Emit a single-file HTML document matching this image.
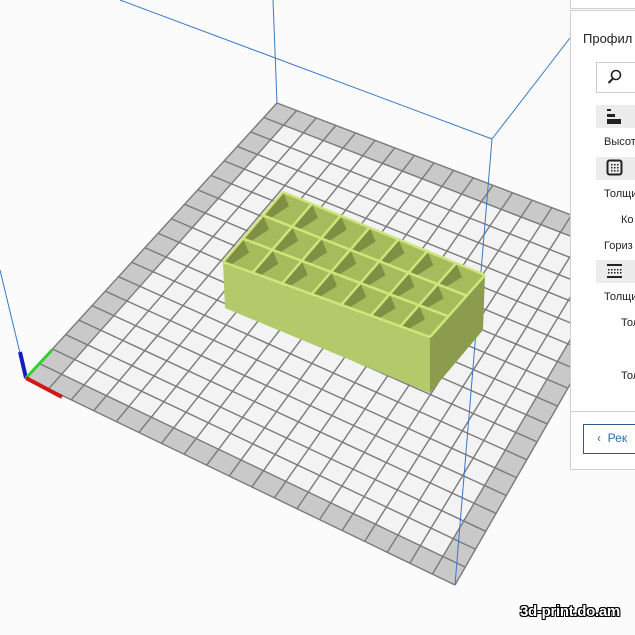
<!DOCTYPE html>
<html><head><meta charset="utf-8"><style>
html,body{margin:0;padding:0;width:635px;height:635px;overflow:hidden;background:#fbfbfb;font-family:"Liberation Sans","DejaVu Sans",sans-serif}
#panel{position:absolute;left:570px;top:10px;width:70px;height:458px;background:#fff;border-left:1px solid #d0d0d0;border-top:1px solid #d0d0d0;border-bottom:1px solid #d0d0d0}
#top{position:absolute;left:570px;top:-2px;width:70px;height:10px;background:#fff;border-left:1px solid #d0d0d0;border-bottom:1px solid #d0d0d0}
.t{position:absolute;font-size:11px;color:#222;white-space:nowrap}
.ib{position:absolute;left:596px;width:45px;height:23px;background:#ececec}
#wm{position:absolute;left:520px;top:603px;font-size:15px;font-weight:bold;color:#fff;letter-spacing:-0.3px;text-shadow:-1px -1px 0 #000,1px -1px 0 #000,-1px 1px 0 #000,1px 1px 0 #000,0 1px 0 #000,1px 0 0 #000,-1px 0 0 #000,0 -1px 0 #000}
</style></head><body>
<svg id="s" width="635" height="635" style="position:absolute;left:0;top:0"></svg>
<div id="top"></div>
<div id="panel"></div>
<div class="t" style="left:583px;top:31px;font-size:13px">Профил</div>
<div style="position:absolute;left:596px;top:62px;width:45px;height:29px;border:1px solid #ccc;background:#fff"></div>
<svg style="position:absolute;left:606px;top:68px" width="18" height="18"><circle cx="10" cy="7" r="4.5" fill="none" stroke="#222" stroke-width="1.6"/><line x1="7" y1="10.5" x2="2.5" y2="15" stroke="#222" stroke-width="2"/></svg>
<div class="ib" style="top:105px"></div>
<svg style="position:absolute;left:605px;top:108px" width="20" height="18"><rect x="2" y="1" width="4" height="2" fill="#222"/><rect x="2" y="6" width="8" height="3" fill="#222"/><rect x="2" y="11" width="14" height="5" fill="#222"/></svg>
<div class="t" style="left:604px;top:136px">Высот</div>
<div class="ib" style="top:157px"></div>
<svg style="position:absolute;left:606px;top:159px" width="18" height="18"><rect x="1.5" y="1.5" width="14" height="14" rx="2" fill="none" stroke="#222" stroke-width="2"/><g fill="#222"><rect x="5" y="5" width="1.5" height="1.5"/><rect x="8" y="5" width="1.5" height="1.5"/><rect x="11" y="5" width="1.5" height="1.5"/><rect x="5" y="8" width="1.5" height="1.5"/><rect x="8" y="8" width="1.5" height="1.5"/><rect x="11" y="8" width="1.5" height="1.5"/><rect x="5" y="11" width="1.5" height="1.5"/><rect x="8" y="11" width="1.5" height="1.5"/><rect x="11" y="11" width="1.5" height="1.5"/></g></svg>
<div class="t" style="left:604px;top:188px">Толщи</div>
<div class="t" style="left:621px;top:214px">Ко</div>
<div class="t" style="left:604px;top:240px">Гориз</div>
<div class="ib" style="top:260px"></div>
<svg style="position:absolute;left:605px;top:262px" width="20" height="18"><rect x="2" y="2" width="15" height="2" fill="#222"/><rect x="2" y="14" width="15" height="2" fill="#222"/><g fill="#222"><rect x="3" y="7" width="1.5" height="1.5"/><rect x="6" y="7" width="1.5" height="1.5"/><rect x="9" y="7" width="1.5" height="1.5"/><rect x="12" y="7" width="1.5" height="1.5"/><rect x="15" y="7" width="1.5" height="1.5"/><rect x="3" y="10" width="1.5" height="1.5"/><rect x="6" y="10" width="1.5" height="1.5"/><rect x="9" y="10" width="1.5" height="1.5"/><rect x="12" y="10" width="1.5" height="1.5"/><rect x="15" y="10" width="1.5" height="1.5"/></g></svg>
<div class="t" style="left:604px;top:291px">Толщи</div>
<div class="t" style="left:621px;top:317px">Тол</div>
<div class="t" style="left:621px;top:370px">Тол</div>
<div style="position:absolute;left:571px;top:411px;width:70px;border-top:1px solid #d0d0d0"></div>
<div style="position:absolute;left:583px;top:424px;width:60px;height:28px;border:1px solid #2d5b86;background:#fff"></div>
<div class="t" style="left:597px;top:431px;font-size:12px;color:#2d6ab0">&lsaquo;&nbsp; Рек</div>
<div id="wm">3d-print.do.am</div>
<script>
var s=document.getElementById('s'),h='';
function L(a,b,t){return[a[0]+(b[0]-a[0])*t,a[1]+(b[1]-a[1])*t]}
function bl(u,v){var p=L(T,R,u),q=L(Lf,B,u);return L(p,q,v)}
var T=[277,103],R=[650,245],B=[455,585],Lf=[26,378],N=19;
function poly(pts,f){return '<polygon points="'+pts.map(function(p){return p[0].toFixed(1)+','+p[1].toFixed(1)}).join(' ')+'" fill="'+f+'"/>'}
h+='<g stroke="#3a78c8" stroke-width="1" fill="none"><line x1="273" y1="0" x2="277" y2="103"/><line x1="120" y1="0" x2="492" y2="139"/><line x1="492" y1="139" x2="570" y2="38"/><line x1="0" y1="270" x2="26" y2="378"/></g>';
h+=poly([T,R,B,Lf],'#c9c9c9');
var e=1/N;h+=poly([bl(e,e),bl(1-e,e),bl(1-e,1-e),bl(e,1-e)],'#f3f3f3');
h+='<g stroke="#7a7a7a" stroke-width="1.4">';
for(var i=0;i<=N;i++){var u=i/N,a=bl(u,0),b=bl(u,1),c=bl(0,u),d=bl(1,u);
h+='<line x1="'+a[0]+'" y1="'+a[1]+'" x2="'+b[0]+'" y2="'+b[1]+'"/><line x1="'+c[0]+'" y1="'+c[1]+'" x2="'+d[0]+'" y2="'+d[1]+'"/>';}
h+='</g>';
h+='<line x1="492" y1="139" x2="455" y2="585" stroke="#3a78c8" stroke-width="1"/>';
h+='<line x1="26" y1="378" x2="20" y2="352" stroke="#1020c0" stroke-width="4"/><line x1="26" y1="378" x2="52" y2="350" stroke="#30d030" stroke-width="3"/><line x1="26" y1="378" x2="62" y2="397" stroke="#d01818" stroke-width="4"/>';
var A=[223,262],Bk=[283,192],Rt=[485,275],F=[430,337];
h+=poly([A,F,[430,393],[225,308]],'#b3c96a');
h+=poly([F,Rt,[483,330],[430,393]],'#8c9c4f');
h+=poly([A,Bk,Rt,F],'#96aa52');
function tp(u,v){var p=L(A,Bk,v),q=L(F,Rt,v);return L(p,q,u)}
var cols=7,rows=3;
for(var c=0;c<cols;c++)for(var r=0;r<rows;r++){var p0=tp(c/cols,r/rows),p1=tp((c+1)/cols,r/rows),p2=tp((c+1)/cols,(r+1)/rows),p3=tp(c/cols,(r+1)/rows);
h+=poly([p0,p1,p2,p3],'#a6bb5c');
h+=poly([p3,p0,[p0[0]+6,p0[1]+4],[p3[0]+6,p3[1]+14]],'#7f8f44');}
h+='<g stroke="#cfe67c" stroke-width="2.5" fill="none">';
for(var c=0;c<=cols;c++){var a=tp(c/cols,0),b=tp(c/cols,1);h+='<line x1="'+a[0]+'" y1="'+a[1]+'" x2="'+b[0]+'" y2="'+b[1]+'"/>';}
for(var r=0;r<=rows;r++){var a=tp(0,r/rows),b=tp(1,r/rows);h+='<line x1="'+a[0]+'" y1="'+a[1]+'" x2="'+b[0]+'" y2="'+b[1]+'"/>';}
h+='</g>';
s.innerHTML=h;
</script>
</body></html>
